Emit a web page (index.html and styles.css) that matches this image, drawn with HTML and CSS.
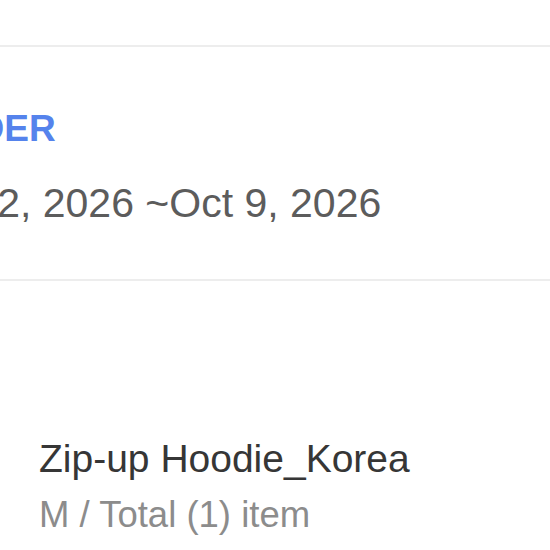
FILE: index.html
```html
<!DOCTYPE html>
<html>
<head>
<meta charset="utf-8">
<link rel="stylesheet" href="styles.css">
</head>
<body>
  <div class="page">
    <div class="topbar"></div>
    <section class="period">
      <div class="period-body">
        <div class="badge">ORDER</div>
        <div class="dates">Oct 2, 2026 ~Oct 9, 2026</div>
      </div>
    </section>
    <section class="item">
      <div class="name">Zip-up Hoodie_Korea</div>
      <div class="option">M / Total (1) item</div>
    </section>
  </div>
</body>
</html>
```

FILE: styles.css
```css
html, body {
  margin: 0;
  padding: 0;
  background: #ffffff;
}
body {
  width: 550px;
  height: 550px;
  overflow: hidden;
  font-family: "Liberation Sans", Arial, sans-serif;
}
.page {
  display: flex;
  flex-direction: column;
}
.topbar {
  height: 45px;
  border-bottom: 2px solid #ededed;
}
.period {
  padding-top: 61px;
  padding-bottom: 52px;
  border-bottom: 2px solid #ededed;
  white-space: nowrap;
}
.period-body {
  display: flex;
  flex-direction: column;
  margin-left: -78px;
}
.badge {
  font-size: 37px;
  line-height: 42px;
  font-weight: 700;
  color: #5583ec;
}
.dates {
  margin-top: 29px;
  font-size: 41px;
  line-height: 48px;
  color: #5c5c5c;
}
.item {
  display: flex;
  flex-direction: column;
  padding-top: 156px;
  padding-left: 39px;
  white-space: nowrap;
}
.name {
  font-size: 39px;
  line-height: 44px;
  color: #363636;
}
.option {
  margin-top: 13px;
  font-size: 36.5px;
  line-height: 42px;
  color: #8c8c8c;
}
```
